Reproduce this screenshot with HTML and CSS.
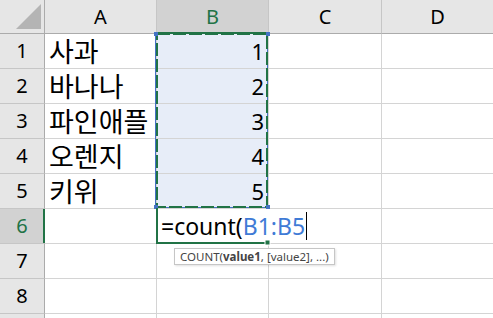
FILE: index.html
```html
<!DOCTYPE html>
<html lang="ko">
<head>
  <meta charset="UTF-8">
  <meta name="viewport" content="width=device-width, initial-scale=1.0">
  <title>Sheet1</title>
  <link rel="stylesheet" href="styles.css">
</head>
<body>
  <div class="sheet">
    <div class="grid">
      <!-- Header row -->
      <div class="corner">
        <svg width="44" height="33" viewBox="0 0 44 33">
          <polygon points="16,29 41,29 41,4" fill="#b4b4b4"/>
        </svg>
      </div>
      <div class="col-head">A</div>
      <div class="col-head selected">B</div>
      <div class="col-head">C</div>
      <div class="col-head">D</div>

      <div class="row-head">1</div>
      <div class="cell text">사과</div>
      <div class="cell num ref">1</div>
      <div class="cell"></div>
      <div class="cell"></div>

      <div class="row-head">2</div>
      <div class="cell text">바나나</div>
      <div class="cell num ref">2</div>
      <div class="cell"></div>
      <div class="cell"></div>

      <div class="row-head">3</div>
      <div class="cell text">파인애플</div>
      <div class="cell num ref">3</div>
      <div class="cell"></div>
      <div class="cell"></div>

      <div class="row-head">4</div>
      <div class="cell text">오렌지</div>
      <div class="cell num ref">4</div>
      <div class="cell"></div>
      <div class="cell"></div>

      <div class="row-head">5</div>
      <div class="cell text">키위</div>
      <div class="cell num ref">5</div>
      <div class="cell"></div>
      <div class="cell"></div>

      <div class="row-head selected">6</div>
      <div class="cell"></div>
      <div class="cell active">
        <div class="editor">=count(<span class="ref-text">B1:B5</span><span class="caret"></span></div>
      </div>
      <div class="cell"></div>
      <div class="cell"></div>

      <div class="row-head">7</div>
      <div class="cell"></div>
      <div class="cell"></div>
      <div class="cell"></div>
      <div class="cell"></div>

      <div class="row-head">8</div>
      <div class="cell"></div>
      <div class="cell"></div>
      <div class="cell"></div>
      <div class="cell"></div>

      <!-- row 9 is only a sliver at the bottom edge -->
      <div class="row-head"></div>
      <div class="cell"></div>
      <div class="cell"></div>
      <div class="cell"></div>
      <div class="cell"></div>
    </div>

    <!-- Reference range, marching ants and active cell frame -->
    <svg class="marks" width="493" height="318" viewBox="0 0 493 318">
      <rect x="155.5" y="32.5" width="112" height="175" fill="none" stroke="#4472c4" stroke-width="1"/>
      <line x1="156" y1="33" x2="268" y2="33" stroke="#217346" stroke-width="2"/>
      <rect x="157" y="34" width="110" height="173" fill="none" stroke="#217346" stroke-width="2" stroke-dasharray="13 3"/>
      <rect x="154" y="32" width="4" height="4" fill="#4472c4"/>
      <rect x="266" y="32" width="4" height="4" fill="#4472c4"/>
      <rect x="154" y="205" width="4" height="4" fill="#4472c4"/>
      <rect x="266" y="205" width="4" height="4" fill="#4472c4"/>
      <line x1="44" y1="209" x2="44" y2="243" stroke="#217346" stroke-width="2"/>
      <line x1="157" y1="208" x2="157" y2="244" stroke="#217346" stroke-width="2"/>
      <line x1="156" y1="243" x2="265" y2="243" stroke="#217346" stroke-width="2"/>
      <rect x="265" y="240" width="5" height="5" fill="#217346" stroke="#fff" stroke-width="1"/>
    </svg>

    <div class="tooltip">COUNT(<b>value1</b>, [value2], ...)</div>
  </div>
</body>
</html>
```

FILE: styles.css
```css
* {
  box-sizing: border-box;
  margin: 0;
  padding: 0;
}

body {
  background-color: #fff;
  overflow: hidden;
}

.sheet {
  position: relative;
  width: 493px;
  height: 318px;
  overflow: hidden;
}

.grid {
  display: grid;
  grid-template-columns: 45px 112px 112px 113px 112px;
  grid-template-rows: 34px repeat(9, 35px);
}

.corner,
.col-head,
.row-head {
  background-color: #e6e6e6;
  color: #000;
  font-family: "Noto Sans", sans-serif;
  font-size: 20px;
  line-height: 1.2;
  display: flex;
  align-items: center;
  justify-content: center;
}

.corner {
  border-right: 1px solid #ababab;
  border-bottom: 1px solid #ababab;
}

.corner svg {
  display: block;
}

.col-head {
  border-right: 1px solid #c6c6c6;
  border-bottom: 1px solid #ababab;
}

.row-head {
  border-right: 1px solid #ababab;
  border-bottom: 1px solid #c6c6c6;
}

.col-head.selected,
.row-head.selected {
  background-color: #d2d2d2;
  color: #217346;
}

.cell {
  position: relative;
  border-right: 1px solid #d4d4d4;
  border-bottom: 1px solid #d4d4d4;
  display: flex;
  align-items: center;
  color: #000;
}

.cell.text {
  font-family: "Noto Sans CJK KR", sans-serif;
  font-size: 27px;
  line-height: 30px;
  padding-left: 4px;
  white-space: nowrap;
}

.cell.num {
  font-family: "Noto Sans", sans-serif;
  font-size: 22px;
  line-height: 30px;
  justify-content: flex-end;
  padding-right: 4px;
}

.cell.ref {
  background-color: #e7edf8;
}

.editor {
  position: absolute;
  left: 0;
  top: 0;
  bottom: 1px;
  z-index: 1;
  display: flex;
  align-items: center;
  padding: 0 3px 0 4px;
  background-color: #fff;
  font-family: "Noto Sans", sans-serif;
  font-size: 23px;
  line-height: 30px;
  white-space: nowrap;
}

.ref-text {
  color: #3f7bd6;
}

.caret {
  display: inline-block;
  width: 1px;
  height: 28px;
  margin-left: 1px;
  background-color: #000;
}

.marks {
  position: absolute;
  left: 0;
  top: 0;
  z-index: 2;
  pointer-events: none;
}

.tooltip {
  position: absolute;
  left: 174px;
  top: 248px;
  z-index: 3;
  height: 17px;
  padding: 0 5px;
  border: 1px solid #c6c6c6;
  background-color: #fff;
  box-shadow: 1px 1px 2px rgba(0, 0, 0, 0.12);
  font-family: "Noto Sans", sans-serif;
  font-size: 11.5px;
  line-height: 15px;
  color: #444;
  white-space: nowrap;
}
```
